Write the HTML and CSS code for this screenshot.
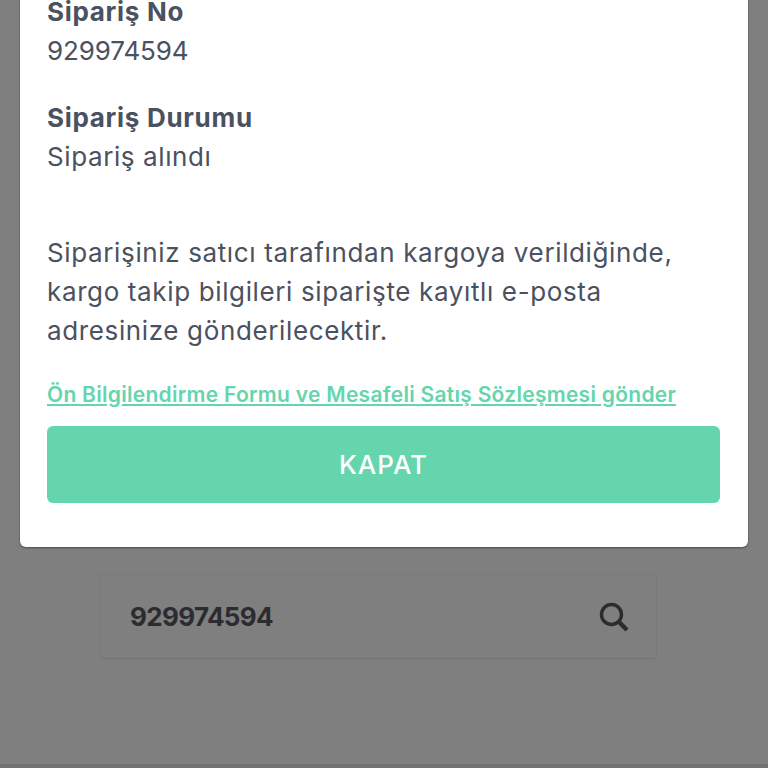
FILE: index.html
```html
<!DOCTYPE html>
<html lang="tr">
<head>
<meta charset="utf-8">
<title>Sipariş Sorgulama</title>
<link rel="stylesheet" href="styles.css">
</head>
<body>
<div class="page">
  <div class="search">
    <span class="search-value">929974594</span>
    <svg class="search-icon" viewBox="0 0 30 30" aria-hidden="true"><circle cx="12.5" cy="12.5" r="10" fill="none" stroke="#2b2c30" stroke-width="3.4"/><path d="M20 20l8 8" stroke="#2b2c30" stroke-width="4.4" fill="none"/></svg>
  </div>
  <div class="bottom-bar"></div>
</div>
<div class="modal">
  <div class="field">
    <div class="label">Sipariş No</div>
    <div class="value number">929974594</div>
  </div>
  <div class="field">
    <div class="label">Sipariş Durumu</div>
    <div class="value">Sipariş alındı</div>
  </div>
  <p class="note">Siparişiniz satıcı tarafından kargoya verildiğinde, kargo takip bilgileri siparişte kayıtlı e-posta adresinize gönderilecektir.</p>
  <a class="doc-link" href="#">Ön Bilgilendirme Formu ve Mesafeli Satış Sözleşmesi gönder</a>
  <button class="close" type="button">KAPAT</button>
</div>
</body>
</html>
```
FILE: styles.css
```css
* { box-sizing: border-box; }
html, body { margin: 0; height: 768px; overflow: hidden; }
body { background: #7f7f7f; font-family: Inter, "Noto Sans", sans-serif; color: #4a5160; position: relative; }
.page { height: 768px; display: flex; flex-direction: column; align-items: center; padding-top: 574px; }
.search { width: 557px; height: 85px; flex: none; margin-left: -11px; border: 1px solid #797979; border-bottom-color: #747474; border-radius: 3px; display: flex; align-items: center; justify-content: space-between; padding: 0 27px 0 29px; }
.search-value { font-size: 26px; font-weight: 700; color: #2b2c30; letter-spacing: -0.65px; }
.search-icon { width: 30px; height: 30px; }
.bottom-bar { margin-top: auto; width: 100%; height: 4px; background: #727272; }
.modal { position: absolute; left: 20px; right: 20px; bottom: 221px; background: #fff; border-radius: 6px; padding: 0 28px 44px 27px; box-shadow: 0 1px 2px rgba(0,0,0,.4); display: flex; flex-direction: column; }
.field { margin-bottom: 28px; }
.field + .field { margin-bottom: 57px; }
.label { font-size: 26px; line-height: 39px; font-weight: 700; letter-spacing: 0.7px; }
.value { font-size: 26px; line-height: 39px; font-weight: 400; letter-spacing: 0.6px; }
.number { letter-spacing: -0.1px; }
.note { margin: 0 0 30px; font-size: 26px; line-height: 39px; letter-spacing: 0.63px; }
.doc-link { font-size: 21px; line-height: 30px; font-weight: 600; color: #64d5ad; text-decoration: underline; white-space: nowrap; margin-bottom: 16px; letter-spacing: 0.28px; }
.close { height: 77px; border: 0; border-radius: 6px; background: #64d5ad; color: #fff; font: 500 26px Inter, "Noto Sans", sans-serif; letter-spacing: 1px; }
```
